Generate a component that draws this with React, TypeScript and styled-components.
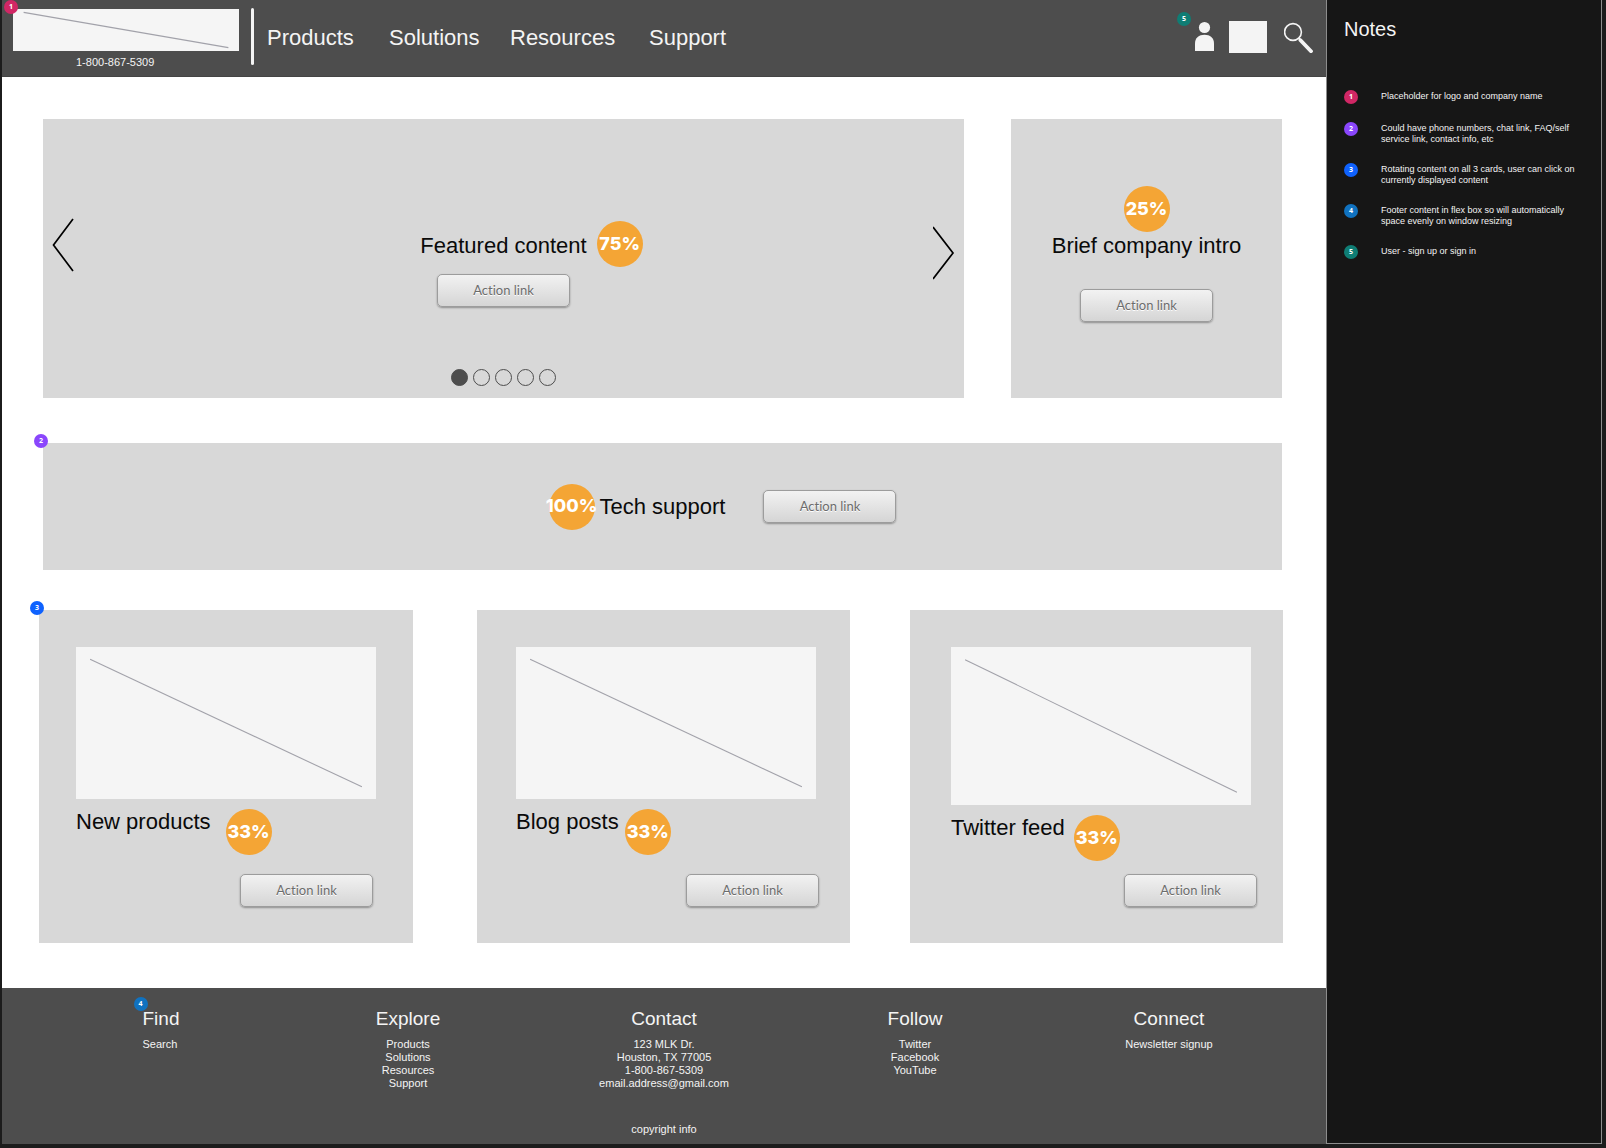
import React, { useState } from "react";
import styled, { createGlobalStyle } from "styled-components";

const GlobalStyle = createGlobalStyle`
  *, *::before, *::after { box-sizing: border-box; }
  body {
    margin: 0;
    background: #1c1c1c;
    font-family: "Liberation Sans", Arial, Helvetica, sans-serif;
  }
  h1, h2, h3, p, ul, ol { margin: 0; padding: 0; font-weight: 400; }
  ul, ol { list-style: none; }
  a { color: inherit; text-decoration: none; }
  button { font: inherit; color: inherit; padding: 0; border: 0; background: none; cursor: pointer; }
  svg { display: block; }
`;

const markerColors = ["#d12765", "#8a46fc", "#0f62fe", "#1072c0", "#0f7d74"];

const Shell = styled.div`
  display: flex;
  min-height: 100vh;
  padding: 0 4px 4px 2px;
`;

const Site = styled.div`
  flex: 1;
  min-width: 0;
  display: flex;
  flex-direction: column;
  background: #fff;
`;

/* Annotation markers */

const MarkerDot = styled.span<{ $color: string }>`
  display: flex;
  align-items: center;
  justify-content: center;
  flex: none;
  width: 14px;
  height: 14px;
  padding-bottom: 1px;
  border-radius: 50%;
  background: ${(p) => p.$color};
  color: #fff;
  font: 700 7px/12px "Open Sans", "Noto Sans", sans-serif;
`;

const MarkerPin = styled.span<{ $x: number; $y: number }>`
  position: absolute;
  left: ${(p) => p.$x}px;
  top: ${(p) => p.$y}px;
`;

function Marker({ n }: { n: number }) {
  return <MarkerDot $color={markerColors[n - 1]}>{n}</MarkerDot>;
}

function Pin({ n, x, y }: { n: number; x: number; y: number }) {
  return (
    <MarkerPin $x={x} $y={y}>
      <Marker n={n} />
    </MarkerPin>
  );
}

/* Shared parts */

const PlaceholderBox = styled.div<{ $height: number }>`
  height: ${(p) => p.$height}px;
  background: #f5f5f5;
`;

function Placeholder({ height }: { height: number }) {
  return (
    <PlaceholderBox $height={height}>
      <svg width="100%" height="100%" aria-hidden="true">
        <line x1="4.7%" y1="8%" x2="95.3%" y2="92%" stroke="#a2a2aa" strokeWidth="1.1" />
      </svg>
    </PlaceholderBox>
  );
}

const Title = styled.h2`
  color: #0a0a0a;
  font-size: 22px;
  line-height: 26px;
  white-space: nowrap;
`;

const Percent = styled.span`
  display: flex;
  align-items: center;
  justify-content: center;
  flex: none;
  width: 46px;
  height: 46px;
  padding-bottom: 1px;
  border-radius: 50%;
  background: #f4a535;
  color: #fff;
  font: 800 18px/24px Inter, sans-serif;
`;

const ActionButton = styled.button`
  flex: none;
  width: 133px;
  height: 33px;
  padding-bottom: 2px;
  border: 1px solid #9c9c9c;
  border-radius: 5px;
  background: linear-gradient(#f2f2f2, #d5d5d5);
  box-shadow: 0 1px 2px rgba(0, 0, 0, 0.35);
  color: #6c6c6c;
  font: 400 13px/16px Lato, sans-serif;
  font-variant-ligatures: none;
  text-shadow: 0 1px 0 #fff;
`;

/* Header */

const Header = styled.header`
  display: flex;
  align-items: flex-start;
  height: 77px;
  padding: 8px 13px 0 11px;
  background: #4d4d4d;
  border-bottom: 1px solid #444;
  color: #f4f4f4;
`;

const Brand = styled.div`
  position: relative;
  width: 226px;
  padding-top: 1px;
`;

const Phone = styled.a`
  display: block;
  padding: 5px 0 0 63px;
  font-size: 11px;
  line-height: 13px;
`;

const Divider = styled.div`
  width: 3px;
  height: 57px;
  margin: 0 13px 0 12px;
  border-radius: 2px;
  background: #f4f4f4;
`;

const Nav = styled.nav`
  display: grid;
  grid-template-columns: 122px 121px 139px auto;
  padding-top: 17px;
  font-size: 22px;
  line-height: 26px;
`;

const Tools = styled.div`
  display: flex;
  margin-left: auto;
  padding-top: 13px;
`;

const ToolButton = styled.button`
  position: relative;
  display: block;
  height: 32px;
`;

const ToolBox = styled.button`
  width: 38px;
  height: 32px;
  margin: 0 17px 0 15px;
  background: #f4f4f4;
`;

/* Main content */

const Main = styled.main`
  padding: 42px 43px 45px 37px;
`;

const Wide = styled.div`
  margin: 0 1px 0 4px;
`;

const HeroRow = styled.div`
  display: grid;
  grid-template-columns: 921fr 271fr;
  gap: 47px;
`;

const Panel = styled.section`
  position: relative;
  background: #d8d8d8;
`;

const Featured = styled(Panel)`
  display: flex;
  align-items: flex-start;
  justify-content: space-between;
  padding: 0 9px;
`;

const Arrow = styled.button<{ $top: number }>`
  margin-top: ${(p) => p.$top}px;
`;

const FeaturedBody = styled.div`
  display: flex;
  flex-direction: column;
  align-items: center;
  padding: 114px 0 12px;
`;

const TitleWithBadge = styled.div`
  position: relative;
  margin-bottom: 15px;
`;

const SideBadge = styled.span`
  position: absolute;
  left: calc(100% + 10px);
  top: -12px;
`;

const Dots = styled.div`
  display: flex;
  gap: 5px;
  margin-top: 62px;
`;

const Dot = styled.button<{ $active: boolean }>`
  width: 17px;
  height: 17px;
  border: 1px solid #4d4d4d;
  border-radius: 50%;
  background: ${(p) => (p.$active ? "#4d4d4d" : "transparent")};
`;

const Intro = styled(Panel)`
  display: flex;
  flex-direction: column;
  align-items: center;
  padding-top: 67px;

  ${Title} { margin: 1px 0 30px; }
`;

const Tech = styled(Panel)`
  display: grid;
  grid-template-columns: 1fr auto 1fr;
  align-items: center;
  min-height: 127px;
  margin-top: 45px;

  ${Percent} { justify-self: end; margin-right: 5px; }
  ${ActionButton} { margin-left: 38px; }
`;

const Cards = styled.div`
  display: grid;
  grid-template-columns: 374fr 64fr 373fr 60fr 373fr;
  margin-top: 40px;

  > :nth-child(2) { grid-column: 3; }
  > :nth-child(3) { grid-column: 5; }
`;

const Card = styled(Panel)<{ $left: number; $right: number }>`
  display: flex;
  flex-direction: column;
  min-height: 333px;
  padding: 37px ${(p) => p.$right}px 36px ${(p) => p.$left}px;
`;

const CardHeading = styled.div<{ $gap: number }>`
  display: flex;
  align-items: flex-start;
  gap: ${(p) => p.$gap}px;
  margin-top: 10px;
`;

const CardAction = styled.div<{ $inset: number }>`
  display: flex;
  justify-content: flex-end;
  margin-top: auto;
  margin-right: ${(p) => p.$inset}px;
`;

/* Footer */

const Footer = styled.footer`
  flex: 1;
  padding: 20px 23px 4px 37px;
  background: #4d4d4d;
  color: #f4f4f4;
  font-size: 11px;
  line-height: 13px;
  text-align: center;
`;

const FooterColumns = styled.div`
  display: grid;
  grid-template-columns: 244fr 250fr 262fr 240fr 268fr;
  justify-items: center;
  min-height: 115px;
`;

const FooterColumn = styled.div<{ $start?: boolean }>`
  position: relative;
  text-align: ${(p) => (p.$start ? "left" : "center")};
`;

const FooterTitle = styled.h3`
  margin-bottom: 8px;
  font-size: 19px;
  line-height: 22px;
`;

const Copyright = styled.p`
  display: grid;
  grid-template-columns: 494fr 262fr 508fr;

  span { grid-column: 2; }
`;

/* Notes */

const Notes = styled.aside`
  flex: none;
  width: 276px;
  padding: 17px 16px 17px 17px;
  background: #161616;
  border: 1px solid #8d8d8d;
  border-top: 0;
  color: #f4f4f4;
`;

const NotesTitle = styled.h2`
  font-size: 20px;
  line-height: 24px;
`;

const NoteList = styled.ol`
  display: flex;
  flex-direction: column;
  gap: 18px;
  margin-top: 49px;
`;

const Note = styled.li`
  display: flex;
  gap: 23px;
  font-size: 9px;
  line-height: 11px;

  p { padding-top: 1px; }
`;

const footerColumns = [
  { title: "Find", links: ["Search"] },
  { title: "Explore", links: ["Products", "Solutions", "Resources", "Support"] },
  {
    title: "Contact",
    links: ["123 MLK Dr.", "Houston, TX 77005", "1-800-867-5309", "email.address@gmail.com"],
  },
  { title: "Follow", links: ["Twitter", "Facebook", "YouTube"] },
  { title: "Connect", links: ["Newsletter signup"] },
];

const cards = [
  { title: "New products", height: 152, left: 37, right: 37, gap: 15, inset: 3 },
  { title: "Blog posts", height: 152, left: 39, right: 34, gap: 6, inset: -3 },
  { title: "Twitter feed", height: 158, left: 41, right: 32, gap: 9, inset: -6 },
];

const notes = [
  "Placeholder for logo and company name",
  "Could have phone numbers, chat link, FAQ/self service link, contact info, etc",
  "Rotating content on all 3 cards, user can click on currently displayed content",
  "Footer content in flex box so will automatically space evenly on window resizing",
  "User - sign up or sign in",
];

export default function App() {
  const [slide, setSlide] = useState(0);
  const move = (step: number) => setSlide((s) => (s + step + 5) % 5);

  return (
    <>
      <GlobalStyle />
      <Shell>
        <Site>
          <Header>
            <Brand>
              <Placeholder height={42} />
              <Pin n={1} x={-9} y={-8} />
              <Phone href="tel:18008675309">1-800-867-5309</Phone>
            </Brand>
            <Divider />
            <Nav>
              <a href="#products">Products</a>
              <a href="#solutions">Solutions</a>
              <a href="#resources">Resources</a>
              <a href="#support">Support</a>
            </Nav>
            <Tools>
              <ToolButton aria-label="Account">
                <Pin n={5} x={-18} y={-9} />
                <svg width="19" height="32" viewBox="0 0 19 32" fill="#f4f4f4">
                  <circle cx="9.5" cy="6.5" r="5.6" />
                  <path d="M0 30V22.5C0 17 4 13.7 9.5 13.7S19 17 19 22.5V30Z" />
                </svg>
              </ToolButton>
              <ToolBox aria-label="Menu" />
              <ToolButton aria-label="Search">
                <svg width="29" height="32" viewBox="0 0 29 32" fill="none" stroke="#f4f4f4">
                  <circle cx="9" cy="11" r="8.4" strokeWidth="1.6" />
                  <path d="M14.5 17L17 19.5" strokeWidth="2" />
                  <path d="M16.5 19.3L27 30.2" strokeWidth="3.8" strokeLinecap="round" />
                </svg>
              </ToolButton>
            </Tools>
          </Header>

          <Main>
            <Wide>
              <HeroRow>
                <Featured>
                  <Arrow $top={99} aria-label="Previous" onClick={() => move(-1)}>
                    <svg width="22" height="54" viewBox="0 0 22 54" fill="none" stroke="#000" strokeWidth="1.7">
                      <path d="M21 1L1.5 27L21 53" />
                    </svg>
                  </Arrow>
                  <FeaturedBody>
                    <TitleWithBadge>
                      <Title>Featured content</Title>
                      <SideBadge>
                        <Percent>75%</Percent>
                      </SideBadge>
                    </TitleWithBadge>
                    <ActionButton>Action link</ActionButton>
                    <Dots>
                      {[0, 1, 2, 3, 4].map((i) => (
                        <Dot
                          key={i}
                          $active={i === slide}
                          aria-label={`Slide ${i + 1}`}
                          onClick={() => setSlide(i)}
                        />
                      ))}
                    </Dots>
                  </FeaturedBody>
                  <Arrow $top={107} aria-label="Next" onClick={() => move(1)}>
                    <svg width="22" height="54" viewBox="0 0 22 54" fill="none" stroke="#000" strokeWidth="1.7">
                      <path d="M0 1L20 27L0 53" />
                    </svg>
                  </Arrow>
                </Featured>
                <Intro>
                  <Percent>25%</Percent>
                  <Title>Brief company intro</Title>
                  <ActionButton>Action link</ActionButton>
                </Intro>
              </HeroRow>
              <Tech>
                <Pin n={2} x={-9} y={-9} />
                <Percent>100%</Percent>
                <Title>Tech support</Title>
                <ActionButton>Action link</ActionButton>
              </Tech>
            </Wide>
            <Cards>
              {cards.map((card, i) => (
                <Card key={card.title} $left={card.left} $right={card.right}>
                  {i === 0 && <Pin n={3} x={-9} y={-9} />}
                  <Placeholder height={card.height} />
                  <CardHeading $gap={card.gap}>
                    <Title>{card.title}</Title>
                    <Percent>33%</Percent>
                  </CardHeading>
                  <CardAction $inset={card.inset}>
                    <ActionButton>Action link</ActionButton>
                  </CardAction>
                </Card>
              ))}
            </Cards>
          </Main>

          <Footer>
            <FooterColumns>
              {footerColumns.map((column, i) => (
                <FooterColumn key={column.title} $start={i === 0}>
                  {i === 0 && <Pin n={4} x={-9} y={-11} />}
                  <FooterTitle>{column.title}</FooterTitle>
                  <ul>
                    {column.links.map((link) => (
                      <li key={link}>
                        <a href="#footer">{link}</a>
                      </li>
                    ))}
                  </ul>
                </FooterColumn>
              ))}
            </FooterColumns>
            <Copyright>
              <span>copyright info</span>
            </Copyright>
          </Footer>
        </Site>

        <Notes>
          <NotesTitle>Notes</NotesTitle>
          <NoteList>
            {notes.map((note, i) => (
              <Note key={note}>
                <Marker n={i + 1} />
                <p>{note}</p>
              </Note>
            ))}
          </NoteList>
        </Notes>
      </Shell>
    </>
  );
}
